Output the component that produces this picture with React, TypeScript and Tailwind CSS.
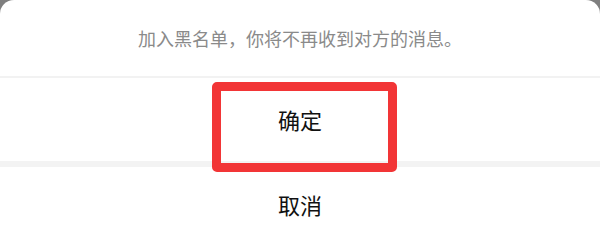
import React from "react";

export default function App() {
  return (
    <div
      className="relative h-[243px] w-[600px] overflow-hidden bg-[#7f7f7f]"
      style={{ fontFamily: '"Noto Sans CJK SC", "Noto Sans", sans-serif' }}
    >
      <div className="flex h-full flex-col rounded-t-[14px] bg-white">
        {/* message */}
        <div className="flex h-[76px] shrink-0 items-center justify-center text-[18px] text-[#8a8a8a]">
          加入黑名单，你将不再收到对方的消息。
        </div>
        <div className="h-[2px] shrink-0 bg-[#f2f2f2]" />

        {/* confirm */}
        <button className="flex h-[83px] shrink-0 items-center justify-center text-[22px] text-[#111]">
          确定
        </button>
        <div className="h-[6px] shrink-0 bg-[#f3f3f3]" />

        {/* cancel */}
        <button className="flex h-[80px] shrink-0 items-center justify-center pb-[6px] text-[22px] text-[#111]">
          取消
        </button>
      </div>

      {/* highlight box */}
      <div className="absolute left-[212px] top-[82px] h-[90px] w-[185px] rounded-[5px] border-[9px] border-[#f23536]" />
    </div>
  );
}
